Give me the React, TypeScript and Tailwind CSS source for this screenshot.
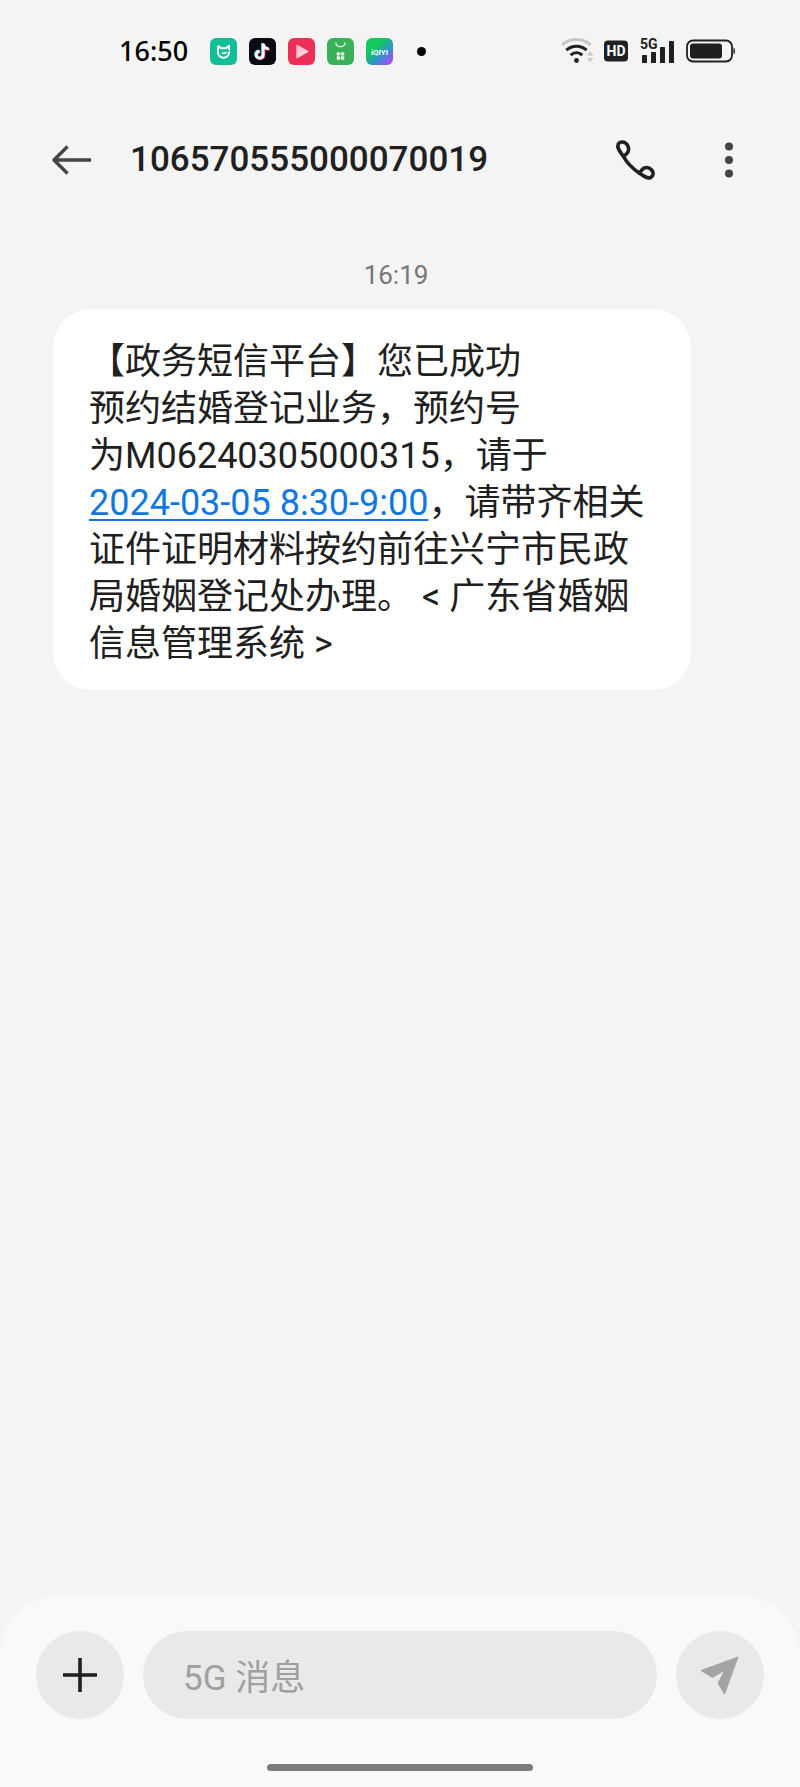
import type { ReactNode } from 'react'

const PHONE_NUMBER = '106570555000070019'

export default function App() {
  return (
    <div
      lang="zh-CN"
      className="flex min-h-screen flex-col bg-[#f4f4f4] font-[Roboto,'Noto_Sans_CJK_SC',sans-serif] text-[#202020]"
    >
      <StatusBar />
      <ChatHeader />

      <main className="flex-1 pt-10">
        <p className="pr-2 text-center text-[26px] leading-9 text-[#777777]">
          <time dateTime="16:19">16:19</time>
        </p>
        <Message />
      </main>

      <Composer />
    </div>
  )
}

function StatusBar() {
  return (
    <div className="flex h-[102px] items-center justify-between pr-16 pl-[119px]">
      <div className="flex items-center">
        <span className="w-[91px] font-['Noto_Sans',sans-serif] text-[27px] leading-9 font-medium text-black">
          16:50
        </span>
        <div className="flex items-center gap-3">
          <MiHomeIcon />
          <TikTokIcon />
          <VideoIcon />
          <StoreIcon />
          <IqiyiIcon />
        </div>
        <span className="ml-6 size-[9px] rounded-full bg-black" />
      </div>

      <div className="flex items-center gap-3">
        <div className="flex items-center gap-2.5">
          <WifiIcon />
          <HdIcon />
        </div>
        <SignalIcon />
        <BatteryIcon />
      </div>
    </div>
  )
}

function ChatHeader() {
  return (
    <header className="flex h-[115px] items-center pr-[50px] pl-[51px]">
      <button type="button" aria-label="返回" className="mr-[38px]">
        <svg width="41" height="32" viewBox="0 0 41 32" fill="none" stroke="#444444" strokeWidth="3.4">
          <path d="M40 16H3" />
          <path d="M16.5 2.5 3 16l13.500 13.500" strokeLinejoin="round" />
        </svg>
      </button>
      <h1 className="flex-1 text-[35px] leading-[47px] font-medium">{PHONE_NUMBER}</h1>
      <button type="button" aria-label="拨打电话" className="mr-[53px]">
        <svg width="40" height="40" viewBox="0 0 40 40" fill="none" stroke="#202020" strokeWidth="3.6" strokeLinejoin="round">
          <path d="M8.500 16.500C4 10.500 1.800 7 3.200 4.200 4.800 1.200 9.800 1.200 12 4.600c1.700 2.600 2.400 4.600 1 7.200-1 1.900-2.700 3.200-4.500 4.700Z" />
          <path d="M8.500 16.500C12 23 17.500 28.500 24.500 33.200" />
          <path d="M24.500 33.200c1.200-2.200 2.800-4.400 4.700-5.200 3-1.100 5.700 0 7.500 2 2.300 2.700 1.700 6.300-1 7.500-3.300 1.400-7.200-1.500-11.200-4.300Z" />
        </svg>
      </button>
      <button type="button" aria-label="更多">
        <svg width="42" height="42" viewBox="0 0 42 42" fill="#444444">
          <circle cx="21" cy="7.500" r="4" />
          <circle cx="21" cy="21" r="4" />
          <circle cx="21" cy="34.500" r="4" />
        </svg>
      </button>
    </header>
  )
}

function Message() {
  return (
    <article className="mt-4 mr-[109px] ml-[53px] rounded-[38px] bg-white px-9 pt-[30px] pb-[22px] text-[36px] leading-[47px] [text-spacing-trim:space-all]">
      <Line>【政务短信平台】您已成功</Line>
      <Line>预约结婚登记业务，预约号</Line>
      <Line>为M06240305000315，请于</Line>
      <Line>
        <a href="#date" className="text-[#0f78e0] underline decoration-2 underline-offset-4">
          2024-03-05 8:30-9:00
        </a>
        ，请带齐相关
      </Line>
      <Line>证件证明材料按约前往兴宁市民政</Line>
      <Line>局婚姻登记处办理。 &lt; 广东省婚姻</Line>
      <Line>信息管理系统 &gt;</Line>
    </article>
  )
}

function Line({ children }: { children: ReactNode }) {
  return <span className="block whitespace-nowrap">{children}</span>
}

function Composer() {
  return (
    <footer className="rounded-t-[60px] bg-[#f9f9f9] px-9 pt-[35px] pb-4">
      <form className="flex items-center gap-[19px]">
        <button
          type="button"
          aria-label="添加"
          className="flex size-[88px] shrink-0 items-center justify-center rounded-full bg-[#e9e9e9]"
        >
          <svg width="34" height="34" viewBox="0 0 34 34" stroke="#202020" strokeWidth="3.6">
            <path d="M17 0v34M0 17h34" />
          </svg>
        </button>
        <input
          type="text"
          aria-label="5G 消息"
          placeholder="5G 消息"
          className="h-[88px] min-w-0 flex-1 rounded-full bg-[#e9e9e9] px-10 pt-1.5 text-[35px] outline-none placeholder:text-[#a0a0a0]"
        />
        <button
          type="button"
          aria-label="发送"
          className="flex size-[88px] shrink-0 items-center justify-center rounded-full bg-[#e9e9e9]"
        >
          <svg width="40" height="40" viewBox="0 0 40 40" fill="#a4a4a4" stroke="#a4a4a4" strokeLinejoin="round">
            <path d="M1 15.500 38 2 24.500 39l-6.500-11 7-13-12.500 7.500Z" />
          </svg>
        </button>
      </form>
      <div className="mx-auto mt-[45px] h-[7px] w-[266px] rounded-full bg-[#7c7c7c]" />
    </footer>
  )
}

/* Notification icons */

function MiHomeIcon() {
  return (
    <svg width="27" height="27" viewBox="0 0 27 27" fill="none">
      <rect width="27" height="27" rx="6" fill="#12bd98" />
      <path
        d="M8 7.800v6.400a5.500 5.500 0 0 0 11 0V7.800l-3.200 2.500h-4.600L8 7.800"
        stroke="#fff"
        strokeWidth="2"
        strokeLinejoin="round"
      />
      <path d="M12 15.200h3l4-3" stroke="#fff" strokeWidth="1.600" />
      <path d="M16.800 10.800 20.500 13l-4.500 1.500Z" fill="#12bd98" />
    </svg>
  )
}

function TikTokIcon() {
  const note = 'M14.200 5.500v11.300a3.500 3.500 0 1 1-3.500-3.500M14.200 6c.5 3 2.500 4.700 5.600 4.900'
  return (
    <svg width="27" height="27" viewBox="0 0 27 27" fill="none" strokeWidth="2.800">
      <rect width="27" height="27" rx="6" fill="#0b0b14" />
      <path d={note} stroke="#25e5e5" transform="translate(-.7 -.5)" />
      <path d={note} stroke="#f52b5b" transform="translate(.8 .6)" />
      <path d={note} stroke="#fff" />
    </svg>
  )
}

function VideoIcon() {
  return (
    <svg width="27" height="27" viewBox="0 0 27 27">
      <defs>
        <linearGradient id="play" x1="0" y1="0" x2="1" y2="1">
          <stop offset="0" stopColor="#ffb3c1" />
          <stop offset="1" stopColor="#ffe3e7" />
        </linearGradient>
      </defs>
      <rect width="27" height="27" rx="6" fill="#ec2f56" />
      <path d="M9 7.500v12l10.500-6Z" fill="url(#play)" stroke="url(#play)" strokeWidth="1.500" strokeLinejoin="round" />
    </svg>
  )
}

function StoreIcon() {
  return (
    <svg width="27" height="27" viewBox="0 0 27 27" fill="#e9fbe9">
      <rect width="27" height="27" rx="6" fill="#38b259" />
      <path d="M8.800 4.500c.4 5.600 9 5.600 9.400 0" fill="none" stroke="#e9fbe9" strokeWidth="1.300" />
      <circle cx="11.400" cy="15.800" r="1.900" />
      <circle cx="15.600" cy="15.800" r="1.900" />
      <circle cx="11.400" cy="20" r="1.900" />
      <circle cx="15.600" cy="20" r="1.900" />
    </svg>
  )
}

function IqiyiIcon() {
  return (
    <svg width="27" height="27" viewBox="0 0 27 27">
      <defs>
        <linearGradient id="iqiyi" x1="0.100" y1="0" x2="1" y2="1">
          <stop offset="0.300" stopColor="#12c95e" />
          <stop offset="0.600" stopColor="#2f93c8" />
          <stop offset="0.850" stopColor="#9457f5" />
        </linearGradient>
      </defs>
      <rect width="27" height="27" rx="6" fill="url(#iqiyi)" />
      <text x="13.500" y="16.500" textAnchor="middle" fontSize="8" fontWeight="700" fill="#fff" fontFamily="Roboto, sans-serif">
        iQIYI
      </text>
    </svg>
  )
}

/* System icons */

function WifiIcon() {
  return (
    <svg width="33" height="26" viewBox="0 0 33 26" fill="none" strokeWidth="3">
      <path d="M1.200 6.800c8-7 20.500-7 28.500 0" stroke="#c6c6c6" />
      <path d="M5.300 12.200c5.800-5.400 14.500-5.400 20.300 0" stroke="#202020" />
      <path d="M9.600 17.200c3.500-3.200 8.200-3.200 11.700 0" stroke="#202020" />
      <circle cx="15.500" cy="22.500" r="2.400" fill="#202020" />
      <path d="m26 17.500 3.300-4 3.300 4ZM26 20l3.300 4 3.300-4Z" fill="#c6c6c6" />
    </svg>
  )
}

function HdIcon() {
  return (
    <svg width="24" height="22" viewBox="0 0 24 22">
      <rect width="24" height="21" y="0.500" rx="4" fill="#202020" />
      <text x="12" y="16" textAnchor="middle" fontSize="14" fontWeight="700" fill="#fff" fontFamily="Roboto, sans-serif">
        HD
      </text>
    </svg>
  )
}

function SignalIcon() {
  return (
    <svg width="34" height="34" viewBox="0 -4 34 34" fill="#202020">
      <text x="0" y="11" fontSize="14" fontWeight="700" fontFamily="Roboto, sans-serif">
        5G
      </text>
      <rect x="2" y="17" width="5" height="8" rx="0.600" />
      <rect x="11" y="14" width="5" height="11" rx="0.600" />
      <rect x="20" y="9" width="5" height="16" rx="0.600" />
      <rect x="29" y="3" width="5" height="22" rx="0.600" />
    </svg>
  )
}

function BatteryIcon() {
  return (
    <svg width="50" height="24" viewBox="0 0 50 24" fill="#202020">
      <rect x="1" y="1.500" width="45" height="21" rx="6" fill="none" stroke="#202020" strokeWidth="1.800" />
      <rect x="4" y="4.500" width="32" height="15" rx="3" />
      <path d="M47.500 8.500c2 .5 2 6.500 0 7Z" />
    </svg>
  )
}
